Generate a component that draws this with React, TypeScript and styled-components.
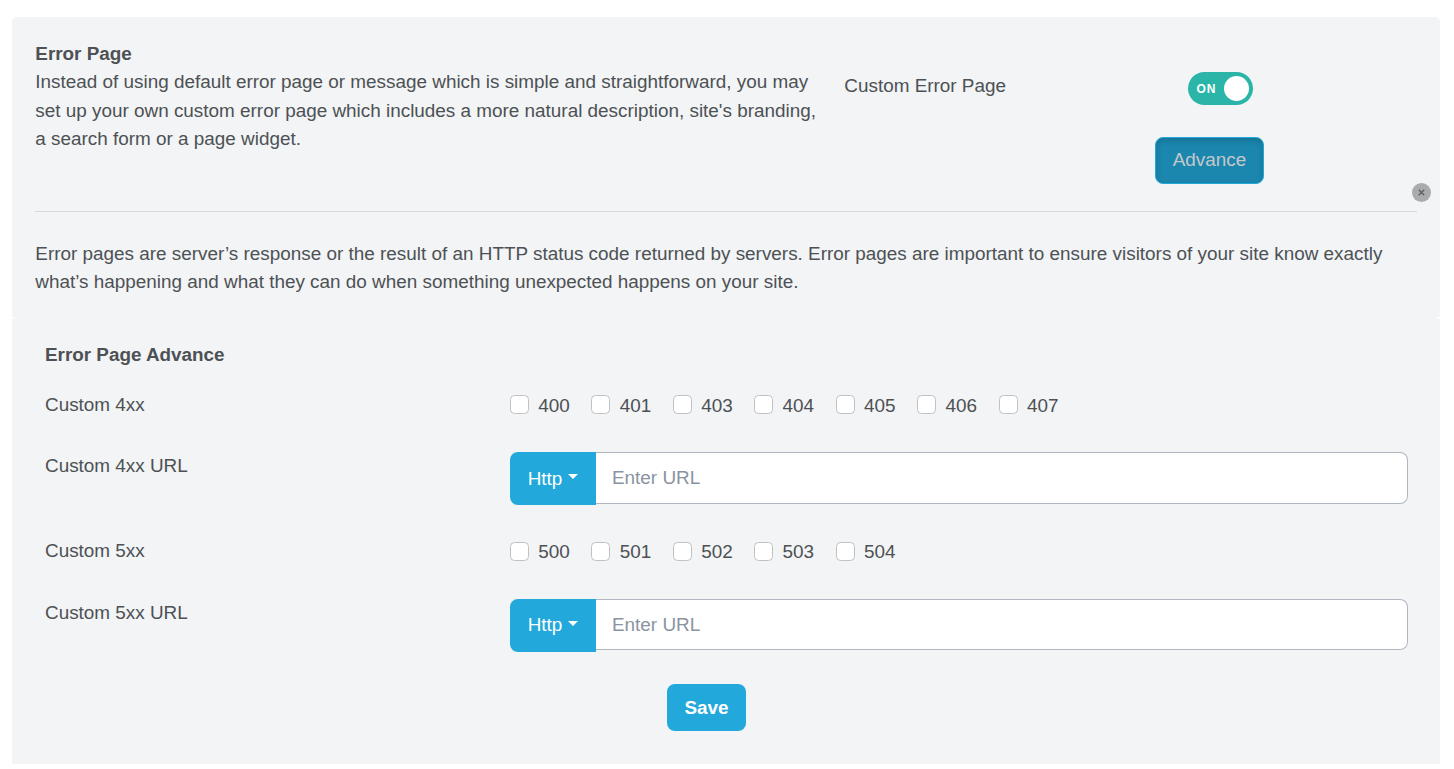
import React from "react";
import styled, { createGlobalStyle } from "styled-components";

const GlobalStyle = createGlobalStyle`
  * { box-sizing: border-box; }
  html, body { margin: 0; background: #fff; }
  body, button, input {
    font-family: "Liberation Sans", Arial, sans-serif;
    font-size: 18.9px;
    line-height: 28.34px;
    color: #4d5154;
  }
`;

const Page = styled.main`
  width: 1454px;
  height: 769px;
  padding: 17px 14px 5px 12px;
  overflow: hidden;
`;

const Panel = styled.section`
  position: relative;
  height: 302px;
  padding: 23px 23px 0;
  background: #f2f4f6;
  border-radius: 5px;
`;

const Top = styled.div`
  display: flex;
  height: 172px;
  border-bottom: 1px solid #d6d8db;
`;

const Intro = styled.div`
  width: 809.3px;
  padding-left: 0.3px;
  white-space: nowrap;
`;

const Heading = styled.h2`
  margin: 0;
  font-size: 18.87px;
  line-height: 28.34px;
  font-weight: 700;
`;

const Text = styled.p`
  margin: 0;
  white-space: nowrap;
`;

const SwitchLabel = styled.div`
  width: 310.7px;
  padding-top: 32px;
`;

const Controls = styled.div`
  display: flex;
  flex-direction: column;
  align-items: center;
  width: 109px;
  padding-top: 32px;
`;

const Toggle = styled.button`
  display: flex;
  align-items: center;
  justify-content: space-between;
  width: 65px;
  height: 33px;
  margin: 0 0 32px 22px;
  padding: 0 4px 0 8.5px;
  border: 0;
  border-radius: 17px;
  background: #2ab5a8;
  color: #fff;
  font-size: 12px;
  line-height: 14px;
  font-weight: 700;
  letter-spacing: 1px;
`;

const Knob = styled.span`
  width: 25px;
  height: 25px;
  border-radius: 50%;
  background: #fff;
`;

const AdvanceButton = styled.button`
  width: 109px;
  height: 47px;
  padding: 0 0 1px;
  border: 1px solid #22a7d9;
  border-radius: 8px;
  background: #1b86ae;
  box-shadow: inset 0 3px 6px rgba(0, 0, 0, 0.14);
  color: #c5c8ca;
`;

const CloseBadge = styled.button`
  position: absolute;
  top: 166px;
  right: 9px;
  display: grid;
  place-items: center;
  width: 19px;
  height: 19px;
  padding: 0;
  border: 0;
  border-radius: 50%;
  background: #a9abad;
`;

const Description = styled.div`
  padding: 28px 0 0 0.3px;
`;

const AdvancedPanel = styled.section`
  height: 445px;
  padding: 22px 32px 0 33px;
  background: #f2f4f6;
`;

const FormRow = styled.div<{ $height: number }>`
  display: flex;
  height: ${(p) => p.$height}px;
`;

const FormLabel = styled.div`
  flex: 0 0 465px;
`;

const Checks = styled.div`
  display: flex;
  padding-top: 1px;
`;

const CheckLabel = styled.label`
  display: flex;
  align-items: flex-start;
  width: 81.45px;
`;

const Checkbox = styled.input<{ $top: number }>`
  appearance: none;
  width: 19px;
  height: 19px;
  margin: ${(p) => p.$top}px 9.3px 0 0;
  border: 1px solid #bfc1c4;
  border-radius: 4.5px;
  background: #fff;
`;

const UrlGroup = styled.div`
  display: flex;
  align-items: flex-start;
  flex: 1;
`;

const ProtocolButton = styled.button<{ $offset: number }>`
  display: flex;
  align-items: center;
  width: 86px;
  height: 53px;
  padding: ${(p) => p.$offset}px 0 0 17.7px;
  border: 0;
  border-radius: 8px 0 0 8px;
  background: #22a8da;
  color: #fff;
`;

const Caret = styled.span<{ $offset: number }>`
  margin: ${(p) => -3.5 - p.$offset}px 0 0 5.4px;
  border-top: 5.5px solid #fff;
  border-left: 5.5px solid transparent;
  border-right: 5.5px solid transparent;
`;

const UrlInput = styled.input<{ $height: number }>`
  flex: 1;
  min-width: 0;
  height: ${(p) => p.$height}px;
  padding: 0 16px;
  border: 1px solid #b1b7c1;
  border-left: 0;
  border-radius: 0 8px 8px 0;
  background: #fff;
  &::placeholder { color: #8a93a2; opacity: 1; }
`;

const SaveButton = styled.button`
  display: block;
  width: 79px;
  height: 47px;
  margin-left: 622px;
  padding: 1px 0 0;
  border: 0;
  border-radius: 8px;
  background: #22a8da;
  color: #fff;
  font-weight: 700;
`;

function CheckGroup({ codes, top }: { codes: number[]; top: number }) {
  return (
    <Checks>
      {codes.map((code) => (
        <CheckLabel key={code}>
          <Checkbox type="checkbox" $top={top} />
          {code}
        </CheckLabel>
      ))}
    </Checks>
  );
}

function UrlField({ height, offset }: { height: number; offset: number }) {
  return (
    <UrlGroup>
      <ProtocolButton $offset={offset}>
        Http
        <Caret $offset={offset} />
      </ProtocolButton>
      <UrlInput $height={height} placeholder="Enter URL" />
    </UrlGroup>
  );
}

export default function App() {
  return (
    <Page>
      <GlobalStyle />
      <Panel>
        <Top>
          <Intro>
            <Heading>Error Page</Heading>
            <Text>
              Instead of using default error page or message which is simple and straightforward, you may
              <br />
              set up your own custom error page which includes a more natural description, site's branding,
              <br />a search form or a page widget.
            </Text>
          </Intro>
          <SwitchLabel>Custom Error Page</SwitchLabel>
          <Controls>
            <Toggle>
              ON
              <Knob />
            </Toggle>
            <AdvanceButton>Advance</AdvanceButton>
          </Controls>
        </Top>
        <CloseBadge aria-label="Close">
          <svg width="7" height="7" viewBox="0 0 7 7" stroke="#5c5f62" strokeWidth="1.3">
            <path d="M0.8 0.8 6.2 6.2M6.2 0.8 0.8 6.2" />
          </svg>
        </CloseBadge>
        <Description>
          <Text>
            Error pages are server’s response or the result of an HTTP status code returned by servers. Error pages are important to ensure visitors of your site know exactly
            <br />
            what’s happening and what they can do when something unexpected happens on your site.
          </Text>
        </Description>
      </Panel>
      <AdvancedPanel>
        <FormRow $height={50}>
          <Heading>Error Page Advance</Heading>
        </FormRow>
        <FormRow $height={61}>
          <FormLabel>Custom 4xx</FormLabel>
          <CheckGroup codes={[400, 401, 403, 404, 405, 406, 407]} top={3} />
        </FormRow>
        <FormRow $height={85}>
          <FormLabel>Custom 4xx URL</FormLabel>
          <UrlField height={52} offset={1.5} />
        </FormRow>
        <FormRow $height={62}>
          <FormLabel>Custom 5xx</FormLabel>
          <CheckGroup codes={[500, 501, 502, 503, 504]} top={4} />
        </FormRow>
        <FormRow $height={85}>
          <FormLabel>Custom 5xx URL</FormLabel>
          <UrlField height={51} offset={0} />
        </FormRow>
        <SaveButton>Save</SaveButton>
      </AdvancedPanel>
    </Page>
  );
}
